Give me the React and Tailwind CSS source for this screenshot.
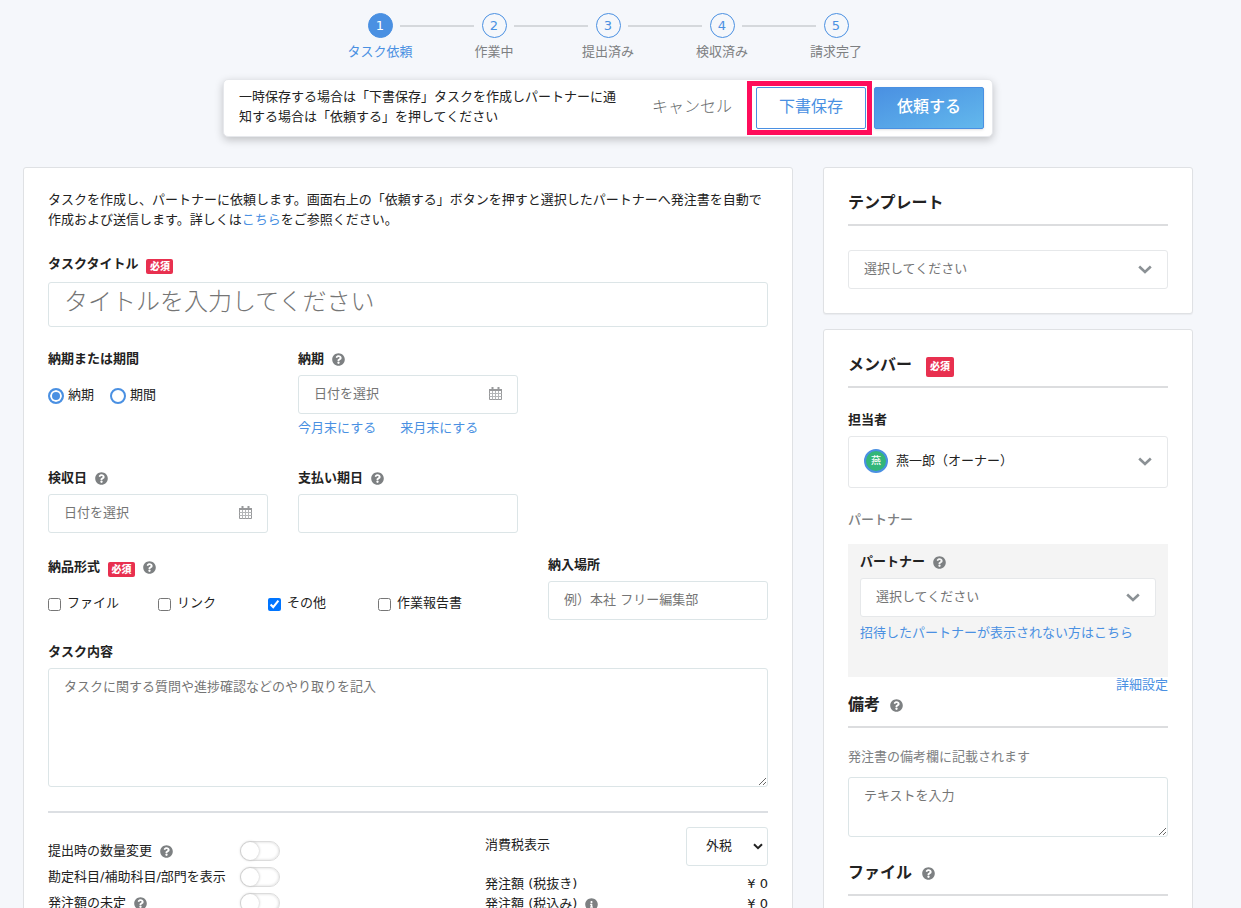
import React, { useState } from 'react';
import { FaQuestionCircle, FaInfoCircle } from 'react-icons/fa';

const STEPS = ['タスク依頼', '作業中', '提出済み', '検収済み', '請求完了'];
const FORMATS = ['ファイル', 'リンク', 'その他', '作業報告書'];

const fieldClass =
  'block w-full rounded-[3px] border border-[#dce5e7] bg-white px-[15px] placeholder:text-[#757575] outline-none';

const Help = ({ label = 'ヘルプ' }) => (
  <button type="button" aria-label={label} className="text-[#7d8082]">
    <FaQuestionCircle size={13} />
  </button>
);

const Required = ({ large }) => (
  <span
    className={`mt-1 rounded-[2px] bg-[#e8304f] text-center text-[10px] font-black text-white ${
      large ? 'w-7 leading-5' : 'w-[27px] leading-[15px]'
    }`}
  >
    必須
  </span>
);

const Chevron = () => (
  <svg viewBox="0 0 14 9" className="pointer-events-none absolute right-4 top-1/2 -mt-[5px] h-[9px] w-[14px]" fill="none">
    <path d="M1.200 1.500 7 7l5.800-5.500" stroke="#8b9195" strokeWidth="2.600" />
  </svg>
);

const CalendarIcon = () => (
  <svg viewBox="0 0 13 14" className="pointer-events-none absolute right-4 top-[11px] h-[14px] w-[13px]" fill="none" stroke="#98999b">
    <path d="M.5 3.500h12v10H.5z" />
    <path d="M.5 7.500h12M.5 10.500h12M3.500 5v8.500M6.500 5v8.500M9.500 5v8.500" stroke="#b4b6b8" />
    <path d="M0 4h13M3.500 1v3M9.500 1v3" strokeWidth="2" />
  </svg>
);

const SelectBox = ({ id, label, option, className = 'h-[39px] pl-[15px] text-[#757575]', children }) => (
  <div className="relative">
    <select
      id={id}
      aria-label={label}
      className={`block w-full appearance-none rounded-[3px] border border-[#e6e8ea] bg-white pb-[2px] pr-10 outline-none ${className}`}
    >
      <option>{option}</option>
    </select>
    {children}
    <Chevron />
  </div>
);

const DateField = ({ id }) => (
  <div className="relative">
    <input id={id} type="text" placeholder="日付を選択" className={`${fieldClass} h-[39px] pb-[3px]`} />
    <CalendarIcon />
  </div>
);

const SectionTitle = ({ children }) => (
  <div className="flex items-center border-b-2 border-[#dcdddf] pb-[9px] pt-px text-base font-bold leading-6">
    {children}
  </div>
);

const Toggle = ({ id }) => (
  <input
    id={id}
    type="checkbox"
    className="relative h-5 w-10 appearance-none rounded-full border border-[#dcdcdc] bg-white shadow-[inset_0_0_3px_#d4d4d4] before:absolute before:left-0 before:top-0 before:h-[18px] before:w-[18px] before:rounded-full before:bg-white before:shadow-[0_0_3px_#b5b5b5] checked:bg-[#4a90e2] checked:before:left-5"
  />
);

const Stepper = () => (
  <ol className="flex justify-center pt-[13px]">
    {STEPS.map((step, i) => (
      <li key={step} className="relative flex w-[114px] flex-col items-center">
        {i > 0 && <span className="absolute right-[77px] top-3 h-[2px] w-[74px] bg-[#d5d8dc]" />}
        <span
          className={`h-[25px] w-[25px] rounded-full border border-[#4a90e2] text-center leading-[23px] ${
            i === 0 ? 'bg-[#4a90e2] text-white' : 'text-[#4a90e2]'
          }`}
        >
          {i + 1}
        </span>
        <span className={`mt-1 leading-5 ${i === 0 ? 'text-[#4a90e2]' : 'text-[#7d8082]'}`}>{step}</span>
      </li>
    ))}
  </ol>
);

const ActionBar = () => (
  <div className="mx-auto mt-[17px] flex max-w-[770px] items-center justify-between rounded-[5px] border border-[#e6e8ec] bg-white py-[7px] pl-[15px] pr-2 shadow-[0_3px_8px_rgba(0,0,0,0.22)]">
    <p className="w-[380px] pb-[2px] leading-5">
      一時保存する場合は「下書保存」タスクを作成しパートナーに通知する場合は「依頼する」を押してください
    </p>
    <div className="flex items-center gap-2 text-base">
      <button type="button" className="mr-4 pb-[2px] font-light text-[#66696b]">
        キャンセル
      </button>
      <div className="relative">
        <button type="button" className="block h-[42px] w-[110px] rounded-[2px] border border-[#4a90e2] bg-white pb-[2px] text-[#4a90e2]">
          下書保存
        </button>
        <span className="pointer-events-none absolute -bottom-1.5 -left-[9px] -right-1.5 -top-1.5 border-5 border-[#ff0d5b]" />
      </div>
      <button
        type="button"
        className="h-[42px] w-[110px] rounded-[2px] border border-[#4a90e2] bg-linear-to-br from-[#4a90e2] to-[#63b8ec] pb-[2px] font-medium text-white shadow-sm"
      >
        依頼する
      </button>
    </div>
  </div>
);

const TaskForm = () => {
  const [period, setPeriod] = useState('納期');
  const [formats, setFormats] = useState(['その他']);

  const toggleFormat = (name) => {
    setFormats((prev) => (prev.includes(name) ? prev.filter((f) => f !== name) : [...prev, name]));
  };

  return (
    <section className="min-w-0 flex-1 rounded-[3px] border border-[#dfe1e4] bg-white px-6 pb-6 pt-[22px]">
      <p className="leading-5">
        タスクを作成し、パートナーに依頼します。画面右上の「依頼する」ボタンを押すと選択したパートナーへ発注書を自動で作成および送信します。詳しくは
        <a href="#help" className="text-[#4a90e2]">こちら</a>
        をご参照ください。
      </p>

      <div className="mb-2 mt-6 flex h-5 items-center gap-2">
        <label htmlFor="title" className="font-bold leading-5">タスクタイトル</label>
        <Required />
      </div>
      <input
        id="title"
        type="text"
        placeholder="タイトルを入力してください"
        className={`${fieldClass} h-[45px] pb-1.5 text-2xl font-light`}
      />

      <div className="mt-[22px] grid grid-cols-3 gap-x-[30px]">
        <fieldset>
          <legend className="font-bold leading-5">納期または期間</legend>
          <div className="mt-4 flex gap-4">
            {['納期', '期間'].map((name) => (
              <label key={name} className="flex items-center gap-1 leading-5">
                <input
                  type="radio"
                  name="period"
                  checked={period === name}
                  onChange={() => setPeriod(name)}
                  className="mt-0.5 h-4 w-4 appearance-none rounded-full border-2 border-[#4a90e2] bg-white checked:bg-[#4a90e2] checked:shadow-[inset_0_0_0_2px_white]"
                />
                {name}
              </label>
            ))}
          </div>
        </fieldset>
        <div>
          <div className="mb-1.5 flex items-center gap-2">
            <label htmlFor="due" className="font-bold leading-5">納期</label>
            <Help />
          </div>
          <DateField id="due" />
          <div className="mt-1 flex gap-6 text-[#4a90e2]">
            <a href="#this-month" className="leading-5">今月末にする</a>
            <a href="#next-month" className="leading-5">来月末にする</a>
          </div>
        </div>
      </div>

      <div className="mt-[30px] grid grid-cols-3 gap-x-[30px]">
        <div>
          <div className="mb-1.5 flex items-center gap-2">
            <label htmlFor="inspection" className="font-bold leading-5">検収日</label>
            <Help />
          </div>
          <DateField id="inspection" />
        </div>
        <div>
          <div className="mb-1.5 flex items-center gap-2">
            <label htmlFor="payment" className="font-bold leading-5">支払い期日</label>
            <Help />
          </div>
          <input id="payment" type="text" className={`${fieldClass} h-[39px]`} />
        </div>
      </div>

      <div className="mt-[22px] grid grid-cols-3 gap-x-[30px]">
        <div className="col-span-2">
          <div className="flex h-6 items-center gap-2">
            <span className="font-bold leading-5">納品形式</span>
            <Required />
            <Help />
          </div>
          <div className="mt-3 flex">
            {FORMATS.map((name) => (
              <label key={name} className="flex h-6 w-[110px] items-center gap-1.5">
                <input
                  type="checkbox"
                  checked={formats.includes(name)}
                  onChange={() => toggleFormat(name)}
                  className="mt-[3px] h-[13px] w-[13px]"
                />
                {name}
              </label>
            ))}
          </div>
        </div>
        <div>
          <label htmlFor="place" className="mb-1.5 block font-bold leading-5">納入場所</label>
          <input id="place" type="text" placeholder="例）本社 フリー編集部" className={`${fieldClass} h-[39px] pb-[3px]`} />
        </div>
      </div>

      <label htmlFor="content" className="mb-1.5 mt-[22px] block font-bold leading-5">タスク内容</label>
      <textarea
        id="content"
        placeholder="タスクに関する質問や進捗確認などのやり取りを記入"
        className={`${fieldClass} h-[119px] py-2 leading-5`}
      />

      <hr className="mt-6 border-t-2 border-[#dcdfe3]" />

      <div className="flex justify-between">
        <div className="mt-[25px]">
          <div className="grid grid-cols-[192px_40px] items-center">
            <div className="flex h-[26px] items-center gap-2">
              <label htmlFor="qty">提出時の数量変更</label>
              <Help />
            </div>
            <Toggle id="qty" />
            <label htmlFor="account" className="h-[26px] leading-[26px]">勘定科目/補助科目/部門を表示</label>
            <Toggle id="account" />
            <div className="flex h-[26px] items-center gap-2">
              <label htmlFor="undecided">発注額の未定</label>
              <Help />
            </div>
            <Toggle id="undecided" />
          </div>
        </div>
        <div className="mt-[14px] w-[283px]">
          <div className="flex justify-between">
            <label htmlFor="tax" className="leading-9">消費税表示</label>
            <div className="relative">
              <select id="tax" className="block h-[39px] w-[82px] appearance-none rounded-[3px] border border-[#dce5e7] bg-white pb-[2px] pl-[19px] outline-none">
                <option>外税</option>
                <option>内税</option>
              </select>
              <svg viewBox="0 0 10 7" className="pointer-events-none absolute right-[5px] top-4 h-[7px] w-[10px]" fill="none">
                <path d="M1 1.200 5 5.200l4-4" stroke="#222" strokeWidth="2" />
              </svg>
            </div>
          </div>
          <dl className="mt-2 grid grid-cols-2 leading-5">
            <dt>発注額 (税抜き)</dt>
            <dd className="text-right">¥ 0</dd>
            <dt className="flex items-center gap-2">
              発注額 (税込み)
              <FaInfoCircle size={13} color="#7d8082" />
            </dt>
            <dd className="text-right">¥ 0</dd>
          </dl>
        </div>
      </div>
    </section>
  );
};

const Sidebar = () => (
  <aside className="flex w-[370px] shrink-0 flex-col gap-[15px]">
    <section className="rounded-[3px] border border-[#dfe1e4] bg-white px-6 pb-6 pt-[22px] shadow-[0_1px_1px_rgba(0,0,0,0.05)]">
      <SectionTitle>
        <h2>テンプレート</h2>
      </SectionTitle>
      <div className="mt-6">
        <SelectBox id="template" label="テンプレート" option="選択してください" />
      </div>
    </section>

    <section className="rounded-[3px] border border-[#dfe1e4] bg-white px-6 pb-6 pt-[22px]">
      <SectionTitle>
        <h2 className="mr-[14px]">メンバー</h2>
        <Required large />
      </SectionTitle>

      <label htmlFor="owner" className="mb-1.5 mt-[22px] block font-bold leading-5">担当者</label>
      <SelectBox id="owner" option="燕一郎（オーナー）" className="h-[52px] pl-[47px]">
        <span className="pointer-events-none absolute left-4 top-[13px] h-6 w-6 rounded-full border-2 border-[#4a90e2] bg-[#33b679] text-center text-[10px] font-medium leading-5 text-white">
          燕
        </span>
      </SelectBox>

      <h3 className="mt-[22px] font-medium leading-5 text-[#7d8082]">パートナー</h3>
      <div className="mt-[14px] bg-[#f4f4f4] px-3 pb-[34px] pt-2">
        <div className="mb-1.5 flex items-center gap-2">
          <label htmlFor="partner" className="font-bold leading-5">パートナー</label>
          <Help />
        </div>
        <SelectBox id="partner" option="選択してください" />
        <a href="#invited" className="mt-1.5 block leading-5 text-[#4a90e2]">
          招待したパートナーが表示されない方はこちら
        </a>
      </div>
      <a href="#detail" className="block text-right leading-[15px] text-[#4a90e2]">詳細設定</a>

      <SectionTitle>
        <h2 className="mr-[10px]">備考</h2>
        <Help />
      </SectionTitle>
      <label htmlFor="note" className="mt-[19px] block leading-5 text-[#7d8082]">発注書の備考欄に記載されます</label>
      <textarea
        id="note"
        placeholder="テキストを入力"
        className={`${fieldClass} mb-[23px] mt-[10px] h-[60px] py-2 leading-5`}
      />

      <SectionTitle>
        <h2 className="mr-[10px]">ファイル</h2>
        <Help />
      </SectionTitle>
    </section>
  </aside>
);

const App = () => (
  <div
    lang="ja"
    className="h-screen overflow-hidden bg-[#f5f7fb] pl-[23px] pr-12 font-['DejaVu_Sans','Noto_Sans_CJK_JP',sans-serif] text-[13px] text-[#222]"
  >
    <div className="mx-auto max-w-[1170px]">
      <Stepper />
      <ActionBar />
      <main className="mt-[30px] flex items-start gap-[30px]">
        <TaskForm />
        <Sidebar />
      </main>
    </div>
  </div>
);

export default App;
